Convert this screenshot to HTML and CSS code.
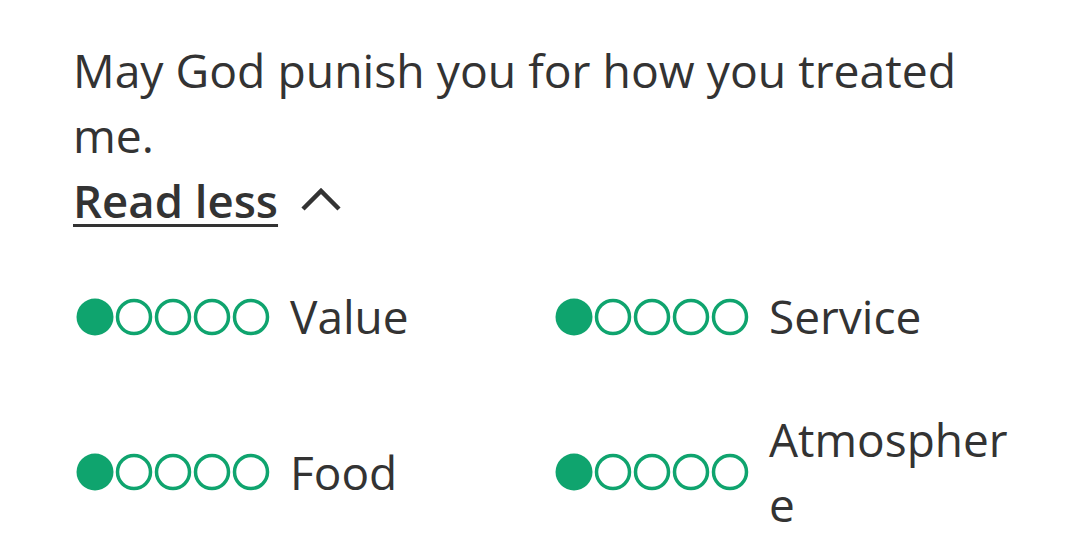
FILE: index.html
```html
<!DOCTYPE html>
<html lang="en">
<head>
    <meta charset="UTF-8">
    <meta name="viewport" content="width=device-width, initial-scale=1.0">
    <title>Review</title>
    <link rel="stylesheet" href="styles.css">
</head>
<body>
    <div class="container">
        <p class="review-text">May God punish you for how you treated me.</p>

        <a class="read-less" href="#">
            <span class="read-less-label">Read less</span>
            <svg class="chevron" width="42" height="26" viewBox="0 0 42 26">
                <path d="M3 22 L21 4 L39 22" fill="none" stroke="#333" stroke-width="4.5"/>
            </svg>
        </a>

        <div class="ratings">
            <div class="rating">
                <svg class="bubbles" width="196" height="40" viewBox="0 0 196 40">
                    <circle cx="19" cy="20" r="18.5" fill="#0fa46e"/>
                    <circle cx="58" cy="20" r="16.5" fill="none" stroke="#0fa46e" stroke-width="3.5"/>
                    <circle cx="97" cy="20" r="16.5" fill="none" stroke="#0fa46e" stroke-width="3.5"/>
                    <circle cx="136" cy="20" r="16.5" fill="none" stroke="#0fa46e" stroke-width="3.5"/>
                    <circle cx="175" cy="20" r="16.5" fill="none" stroke="#0fa46e" stroke-width="3.5"/>
                </svg>
                <span class="rating-label">Value</span>
            </div>
            <div class="rating">
                <svg class="bubbles" width="196" height="40" viewBox="0 0 196 40">
                    <circle cx="19" cy="20" r="18.5" fill="#0fa46e"/>
                    <circle cx="58" cy="20" r="16.5" fill="none" stroke="#0fa46e" stroke-width="3.5"/>
                    <circle cx="97" cy="20" r="16.5" fill="none" stroke="#0fa46e" stroke-width="3.5"/>
                    <circle cx="136" cy="20" r="16.5" fill="none" stroke="#0fa46e" stroke-width="3.5"/>
                    <circle cx="175" cy="20" r="16.5" fill="none" stroke="#0fa46e" stroke-width="3.5"/>
                </svg>
                <span class="rating-label">Service</span>
            </div>
            <div class="rating">
                <svg class="bubbles" width="196" height="40" viewBox="0 0 196 40">
                    <circle cx="19" cy="20" r="18.5" fill="#0fa46e"/>
                    <circle cx="58" cy="20" r="16.5" fill="none" stroke="#0fa46e" stroke-width="3.5"/>
                    <circle cx="97" cy="20" r="16.5" fill="none" stroke="#0fa46e" stroke-width="3.5"/>
                    <circle cx="136" cy="20" r="16.5" fill="none" stroke="#0fa46e" stroke-width="3.5"/>
                    <circle cx="175" cy="20" r="16.5" fill="none" stroke="#0fa46e" stroke-width="3.5"/>
                </svg>
                <span class="rating-label">Food</span>
            </div>
            <div class="rating">
                <svg class="bubbles" width="196" height="40" viewBox="0 0 196 40">
                    <circle cx="19" cy="20" r="18.5" fill="#0fa46e"/>
                    <circle cx="58" cy="20" r="16.5" fill="none" stroke="#0fa46e" stroke-width="3.5"/>
                    <circle cx="97" cy="20" r="16.5" fill="none" stroke="#0fa46e" stroke-width="3.5"/>
                    <circle cx="136" cy="20" r="16.5" fill="none" stroke="#0fa46e" stroke-width="3.5"/>
                    <circle cx="175" cy="20" r="16.5" fill="none" stroke="#0fa46e" stroke-width="3.5"/>
                </svg>
                <span class="rating-label">Atmosphere</span>
            </div>
        </div>
    </div>
</body>
</html>
```

FILE: styles.css
```css
body {
    margin: 0;
    background: #fff;
    color: #333;
    font-family: "Open Sans", sans-serif;
}

.container {
    width: 936px;
    padding: 38px 0 0 73px;
}

.review-text {
    margin: 0;
    font-size: 46.3px;
    line-height: 65px;
}

.read-less {
    display: inline-flex;
    align-items: center;
    gap: 22px;
    color: #333;
    text-decoration: none;
}

.read-less-label {
    font-size: 45.5px;
    line-height: 65px;
    font-weight: 600;
    text-decoration: underline;
    text-decoration-thickness: 3px;
    text-underline-offset: 6px;
}

.chevron {
    margin-top: -2px;
}

.ratings {
    display: grid;
    grid-template-columns: 457px 457px;
    column-gap: 22px;
    row-gap: 58px;
    margin-top: 51px;
}

.rating {
    display: flex;
    align-items: center;
    gap: 18px;
}

.bubbles {
    flex: none;
    margin-left: 3px;
}

.rating-label {
    width: 240px;
    font-size: 46px;
    line-height: 65px;
    overflow-wrap: anywhere;
}
```
